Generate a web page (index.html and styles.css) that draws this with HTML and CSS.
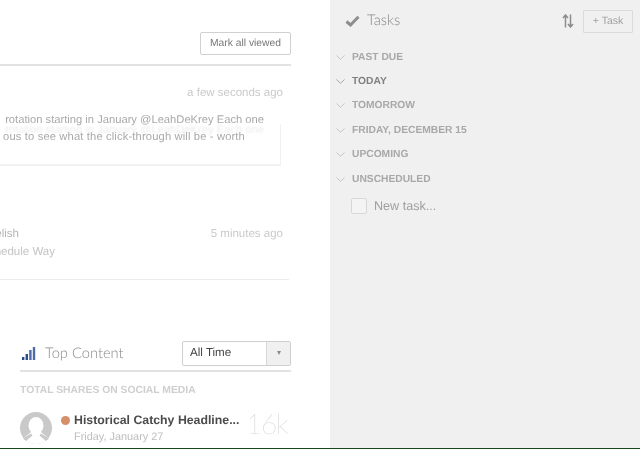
FILE: index.html
```html
<!DOCTYPE html>
<html lang="en">
<head>
<meta charset="utf-8">
<title>Dashboard</title>
<link rel="stylesheet" href="styles.css">
</head>
<body>
<div class="app">
  <main class="main">
    <div class="toolbar"><button class="btn">Mark all viewed</button></div>
    <section class="item first">
      <div class="time">a few seconds ago</div>
      <div class="quote">
        <p class="line l1">rotation starting in January @LeahDeKrey Each one</p>
        <div class="quote-box">
          <p class="line l2">ous to see what the click-through will be - worth</p>
        </div>
      </div>
    </section>
    <section class="item second">
      <div class="row-a"><span class="clip name"><span>Delish</span></span><span class="time t2">5 minutes ago</span></div>
      <div class="clip sub"><span>Schedule Way</span></div>
    </section>
    <section class="top">
      <header class="top-head">
        <svg class="bars" width="15" height="15" viewBox="0 0 15 15" aria-hidden="true">
          <rect x="1" y="11" width="2.4" height="3" fill="#2d4a8a"/>
          <rect x="4.6" y="8" width="2.4" height="6" fill="#2d4a8a"/>
          <rect x="8.2" y="4" width="2.4" height="10" fill="#4d6ba6"/>
          <rect x="11.8" y="1" width="2.4" height="13" fill="#4d6ba6"/>
        </svg>
        <h2 class="top-title">Top Content</h2>
        <div class="select"><span class="select-val">All Time</span><span class="select-arrow"><i class="tri"></i></span></div>
      </header>
      <div class="caption">TOTAL SHARES ON SOCIAL MEDIA</div>
      <div class="content-row">
        <svg class="avatar" width="32" height="32" viewBox="0 0 32 32" aria-hidden="true">
          <defs><clipPath id="c"><circle cx="16" cy="16" r="16"/></clipPath></defs>
          <circle cx="16" cy="16" r="16" fill="#c9c9c9"/>
          <g clip-path="url(#c)" fill="#fff">
            <ellipse cx="16" cy="13.5" rx="7.5" ry="8.5"/>
            <path d="M11 20 L4 26 L8 34 H24 L28 26 L21 20 Z"/>
          </g>
          <path d="M3 26.5 L11 21.5 L12.5 23.5 L6 29 Z M29 26.5 L21 21.5 L19.500 23.5 L26 29 Z" fill="#c9c9c9"/>
        </svg>
        <div class="content-text">
          <div class="headline"><i class="dot"></i><span>Historical Catchy Headline...</span></div>
          <div class="date">Friday, January 27</div>
        </div>
        <div class="count">16k</div>
      </div>
    </section>
  </main>
  <aside class="side">
    <header class="side-head">
      <svg class="check" width="15" height="12" viewBox="0 0 15 12" aria-hidden="true"><path d="M1.500 6.500 L5.500 10 L13.500 1.800" fill="none" stroke="#8e8e8e" stroke-width="3"/></svg>
      <h2 class="side-title">Tasks</h2>
      <svg class="sort" width="12" height="14" viewBox="0 0 12 14" aria-hidden="true"><path d="M3.500 13.500V1.500M1 4L3.500 1L6 4M8.500 .5V12.500M6 10L8.500 13L11 10" fill="none" stroke="#8c8c8c" stroke-width="1.500"/></svg>
      <button class="add">+ Task</button>
    </header>
    <ul class="groups">
      <li class="group"><svg class="chev" width="9" height="5" viewBox="0 0 9 5" aria-hidden="true"><path d="M.5 .5L4.500 4.300L8.500 .5"/></svg>PAST DUE</li>
      <li class="group today"><svg class="chev" width="9" height="5" viewBox="0 0 9 5" aria-hidden="true"><path d="M.5 .5L4.500 4.300L8.500 .5"/></svg>TODAY</li>
      <li class="group"><svg class="chev" width="9" height="5" viewBox="0 0 9 5" aria-hidden="true"><path d="M.5 .5L4.500 4.300L8.500 .5"/></svg>TOMORROW</li>
      <li class="group"><svg class="chev" width="9" height="5" viewBox="0 0 9 5" aria-hidden="true"><path d="M.5 .5L4.500 4.300L8.500 .5"/></svg>FRIDAY, DECEMBER 15</li>
      <li class="group"><svg class="chev" width="9" height="5" viewBox="0 0 9 5" aria-hidden="true"><path d="M.5 .5L4.500 4.300L8.500 .5"/></svg>UPCOMING</li>
      <li class="group"><svg class="chev" width="9" height="5" viewBox="0 0 9 5" aria-hidden="true"><path d="M.5 .5L4.500 4.300L8.500 .5"/></svg>UNSCHEDULED</li>
    </ul>
    <div class="new-task"><i class="box"></i><span>New task...</span></div>
  </aside>
</div>
</body>
</html>
```
FILE: styles.css
```css
* { box-sizing: border-box; }
html, body { margin: 0; height: 100%; overflow: hidden; }
body { font-family: "Liberation Sans", Arial, sans-serif; background: #fff; text-rendering: geometricPrecision; }
.app { display: flex; width: 640px; height: 449px; border-bottom: 1px solid #174a17; overflow: hidden; }
.main { width: 330px; flex: none; background: #fff; padding-right: 39px; overflow: hidden; filter: blur(.35px); }
.side { flex: 1; background: #f0f0f0; padding: 9px 7px 0 6px; filter: blur(.35px); }

.toolbar { height: 66px; padding-top: 32px; display: flex; justify-content: flex-end; border-bottom: 2px solid #e2e2e2; }
.btn { width: 91px; height: 23px; padding: 0 0 1px; font: 10.300px "Liberation Sans", Arial, sans-serif; text-rendering: geometricPrecision; color: #777; background: #fff; border: 1px solid #d0d0d0; border-radius: 2px; }

.item { padding-right: 8px; }
.first { height: 113px; padding-top: 19px; }
.time { font-size: 11.500px; line-height: 16px; color: #cacaca; text-align: right; }
.quote { width: 281px; margin-top: 11px; }
.quote-box { height: 42px; padding-top: 5px; border-right: 1px solid #f1f1f1; border-bottom: 2px solid #f1f1f1; }
.line { margin: 0; font-size: 11.200px; line-height: 17px; color: #a9a9a9; white-space: nowrap; text-align: right; height: 17px; }
.l1 { height: 12px; padding-right: 17px; text-shadow: 0 10px 2px #e9e9e9; }
.l2 { padding-right: 35px; letter-spacing: .14px; }
.second { height: 101px; padding-top: 47px; margin-right: 2px; border-bottom: 1px solid #ececec; padding-right: 6px; }
.row-a { display: flex; justify-content: space-between; align-items: center; height: 16px; }
.clip { display: flex; justify-content: flex-end; overflow: hidden; font-size: 11.500px; white-space: nowrap; }
.name { width: 19px; color: #b4b4b4; }
.sub { width: 55px; color: #c4c4c4; margin-top: 2px; line-height: 16px; }

.top { padding-left: 20px; padding-top: 59px; }
.top-head { display: flex; align-items: center; height: 33px; border-bottom: 2px solid #e2e2e2; padding-bottom: 4px; }
.bars { margin: 1px 0 0 1px; flex: none; }
.top-title { margin: 0 0 0 9px; flex: 1; font: 300 14.700px/20px Lato, sans-serif; color: #8a8a8a; }
.select { display: flex; width: 109px; height: 25px; margin-top: 1px; background: #fff; border: 1px solid #cfcfcf; border-radius: 2px; }
.select-val { flex: 1; font-size: 11.600px; line-height: 21px; padding-left: 7px; color: #444; }
.select-arrow { width: 24px; display: flex; align-items: center; justify-content: center; background: #f0f0f0; border-left: 1px solid #d6d6d6; }
.tri { width: 0; height: 0; border-left: 2.500px solid transparent; border-right: 2.500px solid transparent; border-top: 4px solid #8a8a8a; }
.caption { margin-top: 13px; font-size: 10.350px; line-height: 12px; font-weight: 700; color: #cfcfcf; }
.content-row { display: flex; margin-top: 15px; }
.avatar { flex: none; }
.content-text { margin-left: 9px; width: 186px; flex: none; }
.headline { display: flex; align-items: center; font-size: 12.300px; line-height: 16px; font-weight: 700; color: #4b4b4b; white-space: nowrap; margin-top: 0; }
.dot { width: 9px; height: 9px; border-radius: 50%; background: #d58f6a; margin-right: 4px; flex: none; }
.date { font-size: 10.900px; line-height: 15px; color: #bdbdbd; padding-left: 13px; margin-top: 2px; }
.count { font: 100 28px/30px Lato, sans-serif; letter-spacing: -1.300px; color: #b8b8b8; margin-left: -1px; margin-top: -4px; }

.side-head { display: flex; align-items: center; height: 24px; }
.check { flex: none; margin-left: 9px; }
.side-title { margin: -2px 0 0 7px; flex: 1; font: 300 14.700px/20px Lato, sans-serif; color: #888; }
.sort { flex: none; margin-right: 9px; }
.add { width: 50px; height: 23px; padding: 0; font: 10.500px "Liberation Sans", Arial, sans-serif; text-rendering: geometricPrecision; color: #a0a0a0; background: #f0f0f0; border: 1px solid #dadada; border-radius: 1px; }

.groups { list-style: none; margin: 12px 0 0; padding: 0; }
.group { display: flex; align-items: center; height: 24.400px; font-size: 10.250px; font-weight: 700; color: #a8a8a8; white-space: nowrap; }
.today { color: #808080; }
.chev { margin-right: 7px; flex: none; fill: none; stroke: #c6c6c6; stroke-width: 1; }
.today .chev { stroke: #a6a6a6; }
.new-task { display: flex; align-items: center; margin-top: 7px; padding-left: 15px; font-size: 12.600px; color: #a0a0a0; }
.box { width: 16px; height: 16px; background: #f4f4f4; border: 1px solid #d8d8d8; border-radius: 2px; margin-right: 7px; flex: none; }
```
